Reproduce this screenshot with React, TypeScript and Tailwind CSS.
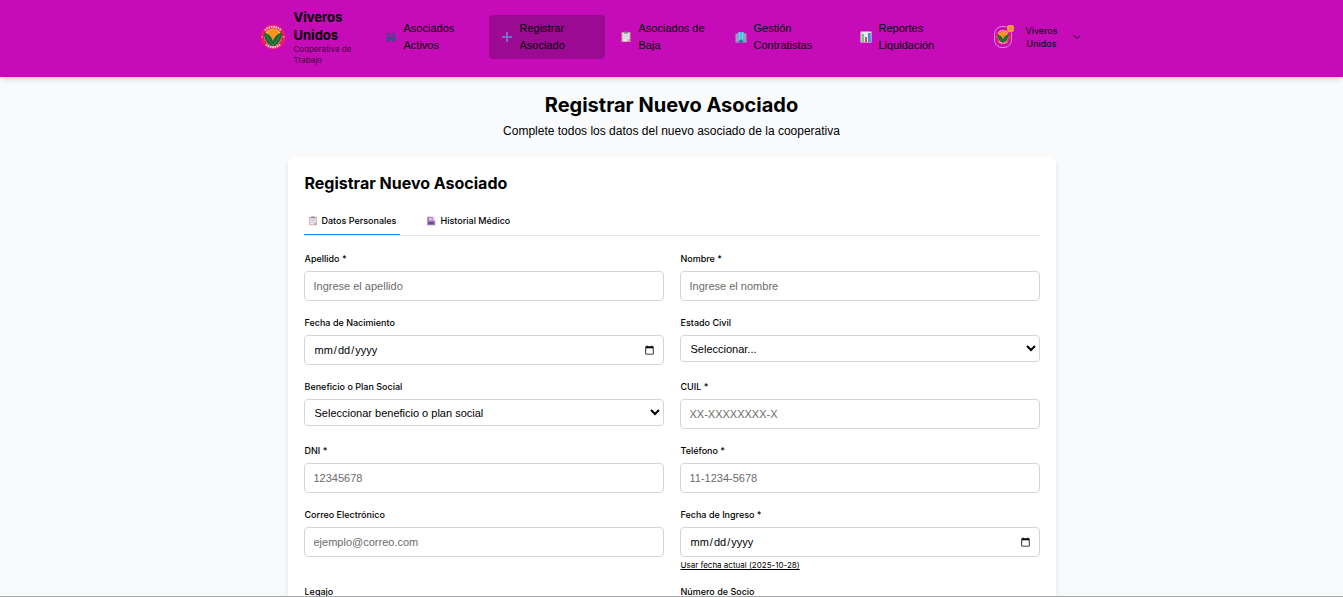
import type { ReactNode } from 'react';

const Logo = ({ className }: { className?: string }) => (
  <svg viewBox="0 0 26 26" className={className} aria-hidden="true">
    <circle cx="13" cy="13" r="12.5" fill="#ec1c6b" />
    <path d="M5 6.500a10.500 10.500 0 0 1 16 0M6 20.500a10.500 10.500 0 0 0 14 0" fill="none" stroke="#ffd0e0" strokeWidth="2.200" strokeDasharray="1.5 0.8" />
    <circle cx="2.200" cy="13" r=".7" fill="#ffd0e0" />
    <circle cx="23.800" cy="13" r=".7" fill="#ffd0e0" />
    <circle cx="13" cy="13" r="8.600" fill="#ffd21f" />
    <circle cx="13" cy="10.500" r="5.800" fill="#f7941d" />
    <path d="M13 22C7.500 21 4 16 4 8.500c4.500 1 7.500 4 9 8.500 1.500-4.500 4.500-7.500 9-8.500C22 16 18.500 21 13 22z" fill="#17663a" />
    <path d="M13 21C10 18 8 15 6 11M13 21c3-3 5-6 7-10" stroke="#5b9a3a" strokeWidth=".7" fill="none" />
  </svg>
);

const People = () => (
  <svg viewBox="0 0 12 12" className="size-3 shrink-0" aria-hidden="true" fill="#51408b">
    <circle cx="3.500" cy="3.200" r="1.800" />
    <circle cx="8.500" cy="3.200" r="1.800" />
    <path d="M1 5.500h10v3h-1v2.500H7V9H5v2H2V8.500H1z" />
  </svg>
);

const Plus = () => (
  <svg viewBox="0 0 12 12" className="size-3 shrink-0" aria-hidden="true">
    <path d="M5 1h2v4h4v2H7v4H5V7H1V5h4z" fill="#7a69c8" />
  </svg>
);

const Clipboard = ({ className }: { className: string }) => (
  <svg viewBox="0 0 12 12" className={className} aria-hidden="true">
    <path d="M1.500 1h9v10h-9z" fill="#d09a88" />
    <path d="M2.500 2h7v6l-2 2.200h-5z" fill="#e9e5f1" />
    <path d="M4 .7h4v2H4z" fill="#8781a0" />
    <path d="M3.500 4.500h5M3.500 6h5M3.500 7.500h3" stroke="#bdb5cf" strokeWidth=".6" />
    <path d="M9.500 8l-2 2.200V8z" fill="#aaa2ba" />
  </svg>
);

const Building = () => (
  <svg viewBox="0 0 12 12" className="size-3 shrink-0" aria-hidden="true">
    <path d="M.5 2.500h11v9H.5z" fill="#9a9db5" />
    <path d="M3 1h6v10.500H3z" fill="#4ba8d8" />
    <path d="M3 3h6M3 5h6M3 7h6M4.500 1v8M7.500 1v8" stroke="#90d9f4" strokeWidth=".6" />
    <path d="M4.500 9.500h3v2h-3z" fill="#3c5574" />
  </svg>
);

const Chart = () => (
  <svg viewBox="0 0 12 12" className="size-3 shrink-0" aria-hidden="true">
    <path d="M.5.5h11v11H.5z" fill="#e8e5ef" />
    <path d="M1.500 3h2.500v8H1.500z" fill="#6ccb72" />
    <path d="M5 6h2v5H5z" fill="#dc4770" />
    <path d="M8 2h2.800v9H8z" fill="#3a8fd8" />
  </svg>
);

const Hospital = () => (
  <svg viewBox="0 0 12 12" className="size-2.5 shrink-0" aria-hidden="true">
    <path d="M1.500 1H8v4.500h3V11H1.500z" fill="#a06fb5" />
    <path d="M3.500 2h3.500v3.500H3.500z" fill="#dcc6e6" />
    <path d="M8.500 1H10v4.500H8.500z" fill="#d5bfdf" />
    <path d="M3 7.500h6v2H3z" fill="#5f4a7d" />
  </svg>
);

const navItems = [
  { label: 'Asociados Activos', icon: <People />, style: 'w-[113px] pr-6' },
  { label: 'Registrar Asociado', icon: <Plus />, style: 'w-[116px] bg-[#9c0a93] pr-3' },
  { label: 'Asociados de Baja', icon: <Clipboard className="size-3 shrink-0" />, style: 'w-[112px] pr-3' },
  { label: 'Gestión Contratistas', icon: <Building />, style: 'w-[122px] pr-3' },
  { label: 'Reportes Liquidación', icon: <Chart />, style: 'w-[116px] pr-3' },
];

const boxStyle =
  "block w-full rounded border border-gray-300 bg-white font-['Liberation_Sans',sans-serif] text-[11px] leading-4 text-black";

function Field({ id, label, children }: { id: string; label: string; children: ReactNode }) {
  return (
    <div>
      <label htmlFor={id} className="mb-1 block pl-px text-[9px] leading-4 font-medium">
        {label}
      </label>
      {children}
    </div>
  );
}

function TextField({ id, label, placeholder, type = 'text' }: { id: string; label: string; placeholder?: string; type?: string }) {
  return (
    <Field id={id} label={label}>
      <input id={id} type={type} placeholder={placeholder} className={`${boxStyle} h-[30px] pr-1.5 pl-[9px] placeholder:text-[#6b6b6b]`} />
    </Field>
  );
}

function SelectField({ id, label, option }: { id: string; label: string; option: string }) {
  return (
    <Field id={id} label={label}>
      <select id={id} className={`${boxStyle} h-[27px] px-1.5`}>
        <option>{option}</option>
      </select>
    </Field>
  );
}

export default function App() {
  return (
    <div className="h-screen overflow-y-auto border-b border-[#a5a5ad] bg-[#f9fafb] font-['Inter','Liberation_Sans',sans-serif] text-black [scrollbar-width:none]">
      <header className="bg-[#c60cb8] shadow-md">
        <div className="mx-auto flex h-[77px] max-w-[824px] items-center pr-0.5 pb-1">
          <a href="#inicio" className="flex w-[113px] shrink-0 items-center gap-2">
            <Logo className="size-[26px] shrink-0" />
            <span>
              <span className="block text-[13px] leading-[18px] font-bold">Viveros Unidos</span>
              <span className="block text-[8px] leading-[11px] text-black/75">Cooperativa de Trabajo</span>
            </span>
          </a>
          <nav className="flex gap-[3px] font-['Liberation_Sans',sans-serif]">
            {navItems.map(({ label, icon, style }) => (
              <a key={label} href="#seccion" className={`flex h-11 items-center gap-[7px] rounded pl-3 text-[11px] leading-[17px] ${style}`}>
                {icon}
                <span>{label}</span>
              </a>
            ))}
          </nav>
          <button type="button" className="ml-auto flex items-center gap-3 text-[9px] leading-[13px]">
            <span className="relative">
              <span className="flex h-[22px] w-[18px] items-center justify-center rounded-lg border border-[#d78be0]">
                <Logo className="size-4" />
              </span>
              <span className="absolute -top-px -right-0.5 size-[7px] rounded-xs bg-[#f0973e]" />
            </span>
            <span className="w-9 text-center">Viveros Unidos</span>
            <svg viewBox="0 0 10 10" className="size-2.5" fill="none" stroke="currentColor" aria-hidden="true">
              <path d="M2 3.500l3 3 3-3" />
            </svg>
          </button>
        </div>
      </header>

      <main className="mx-auto max-w-3xl pt-4 pb-8">
        <div className="text-center">
          <h1 className="text-xl leading-6 font-bold">Registrar Nuevo Asociado</h1>
          <p className="mt-1 font-['Liberation_Sans',sans-serif] text-xs leading-5">
            Complete todos los datos del nuevo asociado de la cooperativa
          </p>
        </div>

        <section className="mt-4 rounded-md bg-white p-4 shadow-md">
          <h2 className="pl-px text-base leading-5 font-bold">Registrar Nuevo Asociado</h2>
          <div role="tablist" className="mt-[15px] flex gap-[22px] border-b border-gray-200 text-[9px] leading-4 font-medium">
            <button type="button" role="tab" aria-selected="true" className="flex h-[27px] items-center gap-1 border-b border-[#2b7fff] px-1">
              <Clipboard className="size-2.5 shrink-0" />
              Datos Personales
            </button>
            <button type="button" role="tab" aria-selected="false" className="flex h-[27px] items-center gap-1 border-b border-transparent px-1">
              <Hospital />
              Historial Médico
            </button>
          </div>

          <form className="mt-[15px] grid grid-cols-2 gap-x-4 gap-y-3.5">
            <TextField id="apellido" label="Apellido *" placeholder="Ingrese el apellido" />
            <TextField id="nombre" label="Nombre *" placeholder="Ingrese el nombre" />
            <TextField id="nacimiento" label="Fecha de Nacimiento" type="date" />
            <SelectField id="civil" label="Estado Civil" option="Seleccionar..." />
            <SelectField id="beneficio" label="Beneficio o Plan Social" option="Seleccionar beneficio o plan social" />
            <TextField id="cuil" label="CUIL *" placeholder="XX-XXXXXXXX-X" />
            <TextField id="dni" label="DNI *" placeholder="12345678" />
            <TextField id="telefono" label="Teléfono *" placeholder="11-1234-5678" />
            <TextField id="correo" label="Correo Electrónico" placeholder="ejemplo@correo.com" type="email" />
            <div>
              <TextField id="ingreso" label="Fecha de Ingreso *" type="date" />
              <button type="button" className="mt-[3px] block pl-px text-[8px] leading-[10px] underline">
                Usar fecha actual (2025-10-28)
              </button>
            </div>
            <TextField id="legajo" label="Legajo" />
            <TextField id="socio" label="Número de Socio" />
          </form>
        </section>
      </main>
    </div>
  );
}
